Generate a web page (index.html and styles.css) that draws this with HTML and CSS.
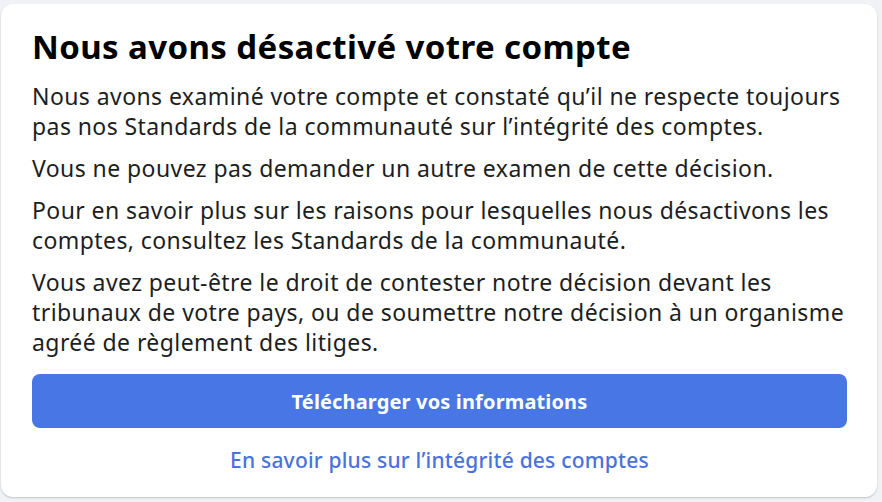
FILE: index.html
```html
<!DOCTYPE html>
<html lang="fr">
<head>
<meta charset="utf-8">
<title>Compte désactivé</title>
<link rel="stylesheet" href="styles.css">
</head>
<body>
<main class="card">
  <h1 class="title">Nous avons désactivé votre compte</h1>
  <div class="body">
    <p>Nous avons examiné votre compte et constaté qu’il ne respecte toujours pas nos Standards de la communauté sur l’intégrité des comptes.</p>
    <p>Vous ne pouvez pas demander un autre examen de cette décision.</p>
    <p>Pour en savoir plus sur les raisons pour lesquelles nous désactivons les comptes, consultez les Standards de la communauté.</p>
    <p>Vous avez peut-être le droit de contester notre décision devant les tribunaux de votre pays, ou de soumettre notre décision à un organisme agréé de règlement des litiges.</p>
  </div>
  <button class="primary" type="button">Télécharger vos informations</button>
  <a class="link" href="#">En savoir plus sur l’intégrité des comptes</a>
</main>
</body>
</html>
```

FILE: styles.css
```css
html, body {
  margin: 0;
  background: #f0f2f5;
}
body {
  padding: 4px 5px 5px 1px;
  font-family: "Noto Sans", "Open Sans", sans-serif;
  color: #050505;
}
.card {
  background: #ffffff;
  border-radius: 12px;
  box-shadow: 0 1px 2px rgba(0,0,0,0.2);
  padding: 25px 30px 25px 31px;
  display: flex;
  flex-direction: column;
  height: 493px;
  box-sizing: border-box;
}
.title {
  margin: 0;
  font-size: 33px;
  letter-spacing: 0.4px;
  line-height: 36px;
  font-weight: 700;
  color: #000;
}
.body {
  margin-top: 16px;
  display: flex;
  flex-direction: column;
  gap: 12px;
}
.body p {
  margin: 0;
  font-size: 23px;
  letter-spacing: 0.42px;
  line-height: 30px;
  color: #1c1e21;
}
.primary {
  margin-top: 17px;
  height: 54px;
  border: 0;
  border-radius: 8px;
  background: #4876e4;
  color: #fff;
  font-family: inherit;
  font-size: 20px;
  letter-spacing: 0.15px;
  font-weight: 700;
}
.link {
  margin-top: 20px;
  text-align: center;
  font-size: 21px;
  letter-spacing: 0.2px;
  line-height: 24px;
  color: #4a72dc;
  font-weight: 500;
  text-decoration: none;
}
```
